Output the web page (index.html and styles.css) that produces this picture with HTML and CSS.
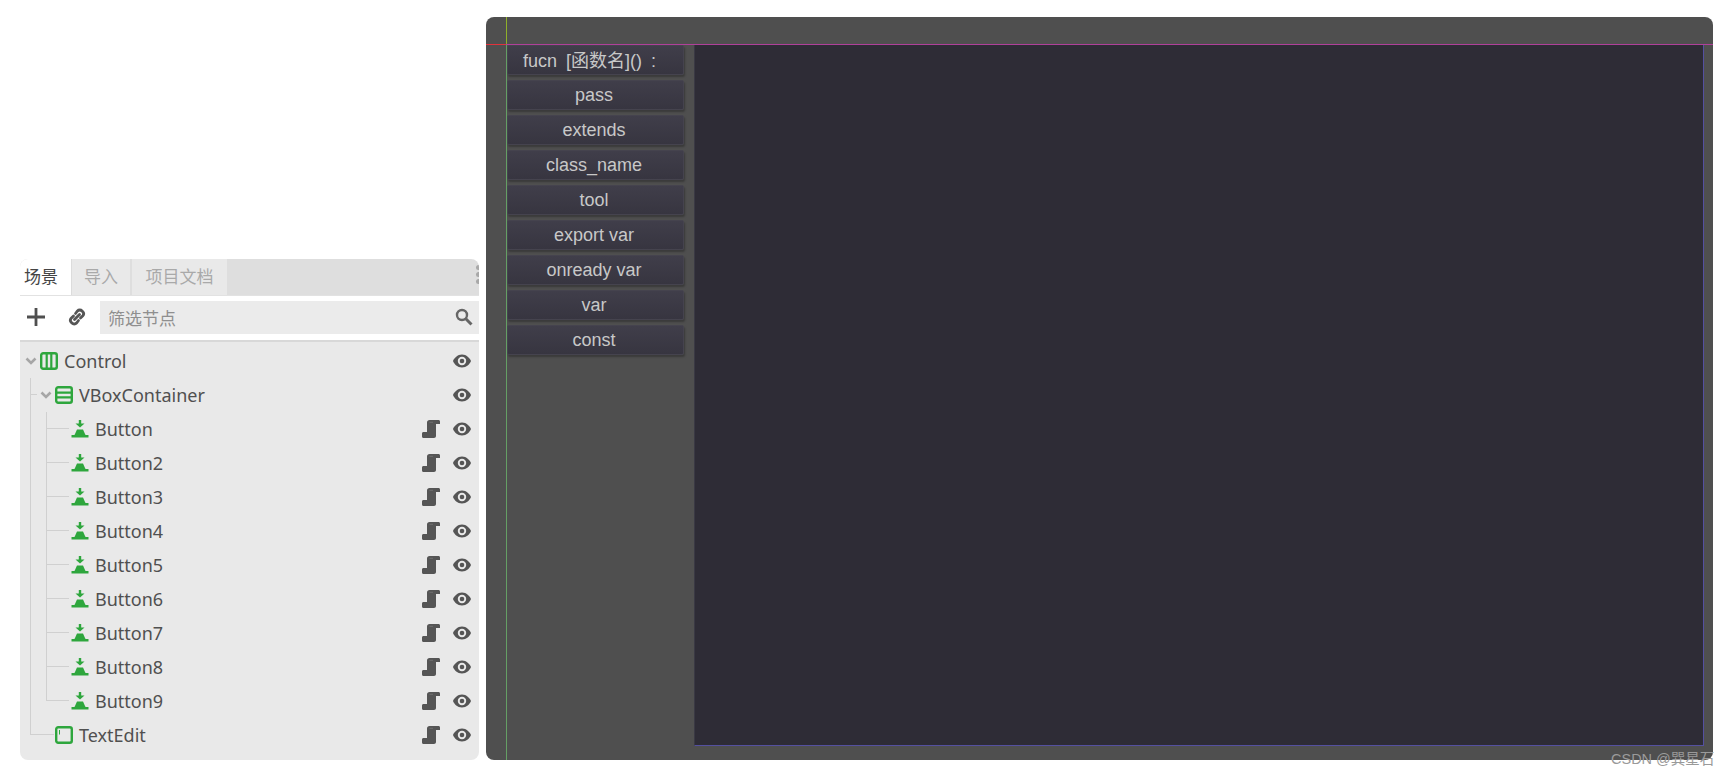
FILE: index.html
```html
<!DOCTYPE html>
<html lang="zh-CN">
<head>
    <meta charset="UTF-8">
    <title>Godot scene dock</title>
    <link rel="stylesheet" href="styles.css">
</head>
<body>
    <svg class="icon-defs" width="0" height="0">
        <symbol id="i-chevron" viewBox="0 0 12 12"><path d="M1.500 3.500 6 8l4.500-4.500" fill="none" stroke="#a6a6a6" stroke-width="2.600"/></symbol>
        <symbol id="i-control" viewBox="0 0 18 18"><rect x="1.200" y="1.200" width="15.600" height="15.600" rx="2" fill="none" stroke="#2ea63d" stroke-width="2.400"/><path d="M6.700 2v14M11.300 2v14" stroke="#2ea63d" stroke-width="2.200"/></symbol>
        <symbol id="i-vbox" viewBox="0 0 18 18"><rect x="1.200" y="1.200" width="15.600" height="15.600" rx="2" fill="none" stroke="#2ea63d" stroke-width="2.400"/><path d="M2 6.700h14M2 11.300h14" stroke="#2ea63d" stroke-width="2.200"/></symbol>
        <symbol id="i-button" viewBox="0 0 18 18"><path d="M7.800 0h2.400v3.500H13.500L9 7.500 4.500 3.500h3.300z" fill="#2ea63d"/><path d="M6 9.500h6l2.500 5.500h-11z" fill="#2ea63d"/><path d="M.5 15h17v2.500H.5z" fill="#2ea63d"/></symbol>
        <symbol id="i-textedit" viewBox="0 0 18 18"><rect x="1.200" y="1.200" width="15.600" height="15.600" rx="2" fill="none" stroke="#2ea63d" stroke-width="2.400"/><path d="M4.500 4v4.500" stroke="#2ea63d" stroke-width="1"/></symbol>
        <symbol id="i-script" viewBox="0 0 18 18"><path d="M5 2.500C5 1 6 0 7.500 0H16.500C17.400 0 18 .6 18 1.500V4H14V16C14 17.200 13.200 18 12 18H1.500C.6 18 0 17.400 0 16.500V13.500C0 12.600.6 12 1.500 12H5z" fill="#555"/><path d="M7.500 2.300h3.500" stroke="#6f6f6f" stroke-width="1"/></symbol>
        <symbol id="i-eye" viewBox="0 0 18 18"><path d="M9 2.500C4.500 2.500 1.200 6 0 9c1.200 3 4.500 6.500 9 6.500s7.800-3.500 9-6.500c-1.200-3-4.500-6.500-9-6.500zm0 2.300a4.200 4.200 0 1 1 0 8.400 4.200 4.200 0 0 1 0-8.400z" fill="#555"/><circle cx="9" cy="9" r="2.300" fill="#555"/></symbol>
    </svg>

    <div class="page">
        <section class="dock">
            <div class="tabs">
                <div class="tab tab-active">场景</div>
                <div class="tab tab-second">导入</div>
                <div class="tab tab-third">项目文档</div>
                <div class="tab-grip"><i></i><i></i><i></i></div>
            </div>
            <div class="toolbar">
                <button class="tool-btn">
                    <svg width="20" height="20" viewBox="0 0 20 20"><path d="M10 1v18M1 10h18" stroke="#4f4f4f" stroke-width="2.800"/></svg>
                </button>
                <button class="tool-btn">
                    <svg width="20" height="20" viewBox="0 0 20 20"><g fill="none" stroke="#555" stroke-width="2.800" stroke-linecap="round"><path d="M8.500 6.500l2-2.500a3 3 0 0 1 4.500 0l.8.800a3 3 0 0 1 0 4l-2.300 2.200"/><path d="M11.500 13.500l-2 2.500a3 3 0 0 1-4.500 0l-.8-.8a3 3 0 0 1 0-4l2.300-2.200"/><path d="M7.500 12.500l5-5"/></g></svg>
                </button>
                <div class="filter">
                    <span>筛选节点</span>
                    <svg width="18" height="18" viewBox="0 0 18 18"><circle cx="7" cy="7" r="5" fill="none" stroke="#666" stroke-width="2.400"/><path d="M10.800 10.800 16.500 16.500" stroke="#666" stroke-width="3"/></svg>
                </div>
            </div>
            <div class="tree">
                <div class="row level-0">
                    <svg class="chevron"><use href="#i-chevron"/></svg>
                    <svg class="node-icon"><use href="#i-control"/></svg>
                    <span class="name">Control</span>
                    <svg class="eye"><use href="#i-eye"/></svg>
                </div>
                <div class="branch branch-outer">
                    <div class="row level-1 has-line">
                        <svg class="chevron"><use href="#i-chevron"/></svg>
                        <svg class="node-icon"><use href="#i-vbox"/></svg>
                        <span class="name">VBoxContainer</span>
                        <svg class="eye"><use href="#i-eye"/></svg>
                    </div>
                    <div class="branch branch-inner">
                        <div class="row level-2 has-line"><svg class="node-icon"><use href="#i-button"/></svg><span class="name">Button</span><svg class="script"><use href="#i-script"/></svg><svg class="eye"><use href="#i-eye"/></svg></div>
                        <div class="row level-2 has-line"><svg class="node-icon"><use href="#i-button"/></svg><span class="name">Button2</span><svg class="script"><use href="#i-script"/></svg><svg class="eye"><use href="#i-eye"/></svg></div>
                        <div class="row level-2 has-line"><svg class="node-icon"><use href="#i-button"/></svg><span class="name">Button3</span><svg class="script"><use href="#i-script"/></svg><svg class="eye"><use href="#i-eye"/></svg></div>
                        <div class="row level-2 has-line"><svg class="node-icon"><use href="#i-button"/></svg><span class="name">Button4</span><svg class="script"><use href="#i-script"/></svg><svg class="eye"><use href="#i-eye"/></svg></div>
                        <div class="row level-2 has-line"><svg class="node-icon"><use href="#i-button"/></svg><span class="name">Button5</span><svg class="script"><use href="#i-script"/></svg><svg class="eye"><use href="#i-eye"/></svg></div>
                        <div class="row level-2 has-line"><svg class="node-icon"><use href="#i-button"/></svg><span class="name">Button6</span><svg class="script"><use href="#i-script"/></svg><svg class="eye"><use href="#i-eye"/></svg></div>
                        <div class="row level-2 has-line"><svg class="node-icon"><use href="#i-button"/></svg><span class="name">Button7</span><svg class="script"><use href="#i-script"/></svg><svg class="eye"><use href="#i-eye"/></svg></div>
                        <div class="row level-2 has-line"><svg class="node-icon"><use href="#i-button"/></svg><span class="name">Button8</span><svg class="script"><use href="#i-script"/></svg><svg class="eye"><use href="#i-eye"/></svg></div>
                        <div class="row level-2 has-line"><svg class="node-icon"><use href="#i-button"/></svg><span class="name">Button9</span><svg class="script"><use href="#i-script"/></svg><svg class="eye"><use href="#i-eye"/></svg></div>
                    </div>
                    <div class="row level-1 leaf has-line">
                        <svg class="node-icon"><use href="#i-textedit"/></svg>
                        <span class="name">TextEdit</span>
                        <svg class="script"><use href="#i-script"/></svg>
                        <svg class="eye"><use href="#i-eye"/></svg>
                    </div>
                </div>
            </div>
        </section>

        <section class="viewport">
            <div class="viewport-top"></div>
            <div class="viewport-body">
                <div class="keyword-list">
                    <button class="keyword keyword-func">fucn [函数名]() :</button>
                    <button class="keyword">pass</button>
                    <button class="keyword">extends</button>
                    <button class="keyword">class_name</button>
                    <button class="keyword">tool</button>
                    <button class="keyword">export var</button>
                    <button class="keyword">onready var</button>
                    <button class="keyword">var</button>
                    <button class="keyword">const</button>
                </div>
                <div class="editor"></div>
            </div>
            <div class="guide guide-red"></div>
            <div class="guide guide-magenta"></div>
            <div class="guide guide-yellow"></div>
            <div class="guide guide-green"></div>
        </section>
    </div>
    <div class="watermark">CSDN @巽星石</div>
</body>
</html>
```

FILE: styles.css
```css
* {
    margin: 0;
    padding: 0;
    box-sizing: border-box;
}

html, body {
    height: 100%;
    overflow: hidden;
    background: #fff;
}

body {
    position: relative;
    font-family: "Noto Sans", "Noto Sans CJK SC", sans-serif;
}

.icon-defs {
    position: absolute;
}

.page {
    display: flex;
    align-items: flex-start;
    height: 777px;
    padding-left: 20px;
}

/* left dock */
.dock {
    width: 459px;
    margin-top: 259px;
}

.tabs {
    display: flex;
    height: 37px;
    background: #dedede;
    border-radius: 8px 8px 0 0;
    border-bottom: 1px solid #e2e2e2;
    overflow: hidden;
    position: relative;
}

.tab {
    display: flex;
    align-items: center;
    justify-content: center;
    height: 36px;
    padding-bottom: 3px;
    font-size: 17px;
    color: #a9a9a9;
    background: #e9e9e9;
}

.tab-active {
    width: 52px;
    justify-content: flex-start;
    padding-left: 4px;
    color: #444;
    background: #fff;
    border-right: 1px solid #dcdcdc;
}

.tab-second {
    width: 60px;
    border-right: 2px solid #dedede;
}

.tab-third {
    width: 95px;
}

.tab-grip {
    position: absolute;
    right: -2px;
    top: 6px;
    display: flex;
    flex-direction: column;
    gap: 2px;
}

.tab-grip i {
    width: 5px;
    height: 5px;
    border-radius: 50%;
    background: #a8a8a8;
}

.toolbar {
    display: flex;
    align-items: center;
    height: 44px;
    padding: 0 0 2px 3px;
    background: #fff;
}

.tool-btn {
    display: flex;
    align-items: center;
    justify-content: center;
    width: 26px;
    height: 26px;
    border: none;
    background: none;
    margin-right: 12px;
}

.tool-btn + .tool-btn {
    margin-left: 3px;
    margin-right: 10px;
}

.filter {
    flex: 1;
    display: flex;
    align-items: center;
    justify-content: space-between;
    height: 33px;
    padding: 0 6px 0 8px;
    font-size: 17px;
    color: #8f8f8f;
    background: #ebebeb;
}

.tree {
    padding-top: 2px;
    height: 420px;
    background: #e9e9e9;
    border-top: 2px solid #d8d8d8;
    border-radius: 0 0 8px 8px;
}

.row {
    position: relative;
    display: flex;
    align-items: center;
    height: 34px;
    font-size: 18px;
    color: #505050;
}

.chevron {
    width: 12px;
    height: 12px;
    margin-right: 3px;
    flex: none;
}

.node-icon {
    width: 18px;
    height: 18px;
    margin-right: 6px;
    flex: none;
}

.name {
    flex: 1;
}

.script {
    width: 18px;
    height: 18px;
    margin-right: 13px;
    flex: none;
}

.eye {
    width: 18px;
    height: 18px;
    margin-right: 8px;
    flex: none;
}

.level-0 {
    padding-left: 5px;
}

.level-1 {
    padding-left: 20px;
}

.level-1.leaf {
    padding-left: 35px;
}

.level-2 {
    padding-left: 51px;
}

/* tree guide lines */
.branch {
    position: relative;
}

.branch::before {
    content: "";
    position: absolute;
    top: 0;
    bottom: 17px;
    width: 1px;
    background: #d0d0d0;
}

.branch-outer::before {
    left: 10px;
}

.branch-inner::before {
    left: 26px;
}

.has-line::before {
    content: "";
    position: absolute;
    top: 16px;
    height: 1px;
    background: #d0d0d0;
}

.level-1.has-line::before {
    left: 11px;
    width: 6px;
}

.level-1.leaf.has-line::before {
    width: 23px;
}

.level-2.has-line::before {
    left: 27px;
    width: 22px;
}

/* right viewport */
.viewport {
    position: relative;
    display: flex;
    flex-direction: column;
    width: 1227px;
    height: 743px;
    margin-top: 17px;
    margin-left: 7px;
    background: #4f4f4f;
    border-radius: 8px;
}

.viewport-top {
    height: 28px;
    flex: none;
}

.viewport-body {
    display: flex;
    gap: 10px;
    padding: 0 9px 0 21px;
    height: 701px;
}

.keyword-list {
    display: flex;
    flex-direction: column;
    gap: 5px;
    width: 177px;
    flex: none;
}

.keyword {
    height: 30px;
    padding: 0 3px 0 0;
    font-family: "Liberation Sans", "Noto Sans CJK SC", sans-serif;
    font-size: 18px;
    color: #c8c8c8;
    background: linear-gradient(#403e4a, #373540);
    border: 1px solid #45434e;
    border-radius: 2px;
    box-shadow: 1px 2px 2px #3a3a3a;
}

.keyword-func {
    padding: 0 12px 3px 0;
    word-spacing: 4px;
}

.editor {
    flex: 1;
    background: #2e2c36;
    border-left: 1px solid #3a3944;
    border-right: 1px solid #5450a0;
    border-bottom: 1px solid #5450a0;
}

.guide {
    position: absolute;
}

.guide-red {
    left: 0;
    top: 27px;
    width: 20px;
    height: 1px;
    background: #e0323c;
}

.guide-magenta {
    left: 20px;
    right: 0;
    top: 27px;
    height: 1px;
    background: #b0409a;
}

.guide-yellow {
    left: 20px;
    top: 0;
    width: 1px;
    height: 27px;
    background: #8fb02a;
}

.guide-green {
    left: 20px;
    top: 28px;
    bottom: 0;
    width: 1px;
    background: #659f65;
}

.watermark {
    position: absolute;
    left: 1611px;
    top: 747px;
    font-family: "Liberation Sans", "Noto Sans CJK SC", sans-serif;
    font-size: 14.500px;
    color: #9a9a9a;
}
```
